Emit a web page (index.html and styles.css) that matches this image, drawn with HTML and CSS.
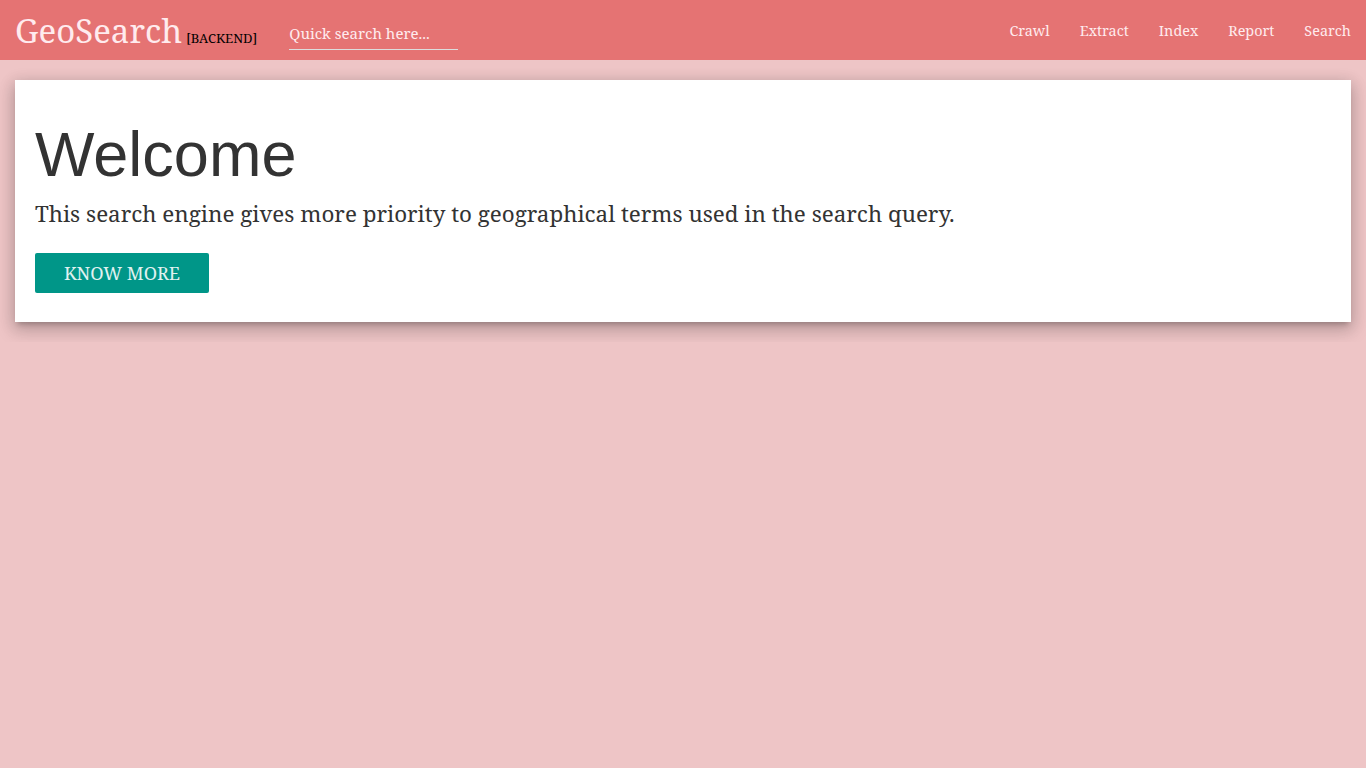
FILE: index.html
```html
<!DOCTYPE html>
<html>
<head>
<meta charset="utf-8">
<link rel="stylesheet" href="styles.css">
</head>
<body>
<nav class="navbar">
  <div class="brand">
    <span class="logo">GeoSearch</span>
    <span class="tag">[BACKEND]</span>
  </div>
  <div class="search"><input type="text" placeholder="Quick search here..."></div>
  <ul class="links">
    <li>Crawl</li><li>Extract</li><li>Index</li><li>Report</li><li>Search</li>
  </ul>
</nav>
<main class="main">
  <section class="card">
    <h1>Welcome</h1>
    <p>This search engine gives more priority to geographical terms used in the search query.</p>
    <button class="btn">KNOW MORE</button>
  </section>
</main>
</body>
</html>
```
FILE: styles.css
```css
* { box-sizing: border-box; }
body { margin: 0; background: #eec5c6; font-family: "Noto Serif", "DejaVu Serif", serif; color: #333; }
.navbar { height: 60px; background: #e57373; display: flex; align-items: center; padding: 0 15px; }
.brand { display: flex; align-items: baseline; }
.logo { font-size: 33px; color: #ffebee; }
.tag { font-size: 13px; color: #000; margin-left: 4px; }
.search { margin-left: 32px; margin-top: 8px; }
.search input { width: 169px; border: none; border-bottom: 1px solid #ddd; background: transparent; font-family: inherit; font-size: 15px; color: #fff; padding: 4px 0 6px; outline: none; }
.search input::placeholder { color: #ffebee; }
.links { list-style: none; display: flex; margin: 0 0 0 auto; padding: 0; gap: 30px; }
.links li { color: #ffebee; font-size: 14.4px; }
.main { padding: 20px 15px; }
.card { background: #fff; padding: 20px 20px 29px; box-shadow: 0 8px 17px 2px rgba(0,0,0,.14), 0 3px 14px 2px rgba(0,0,0,.12), 0 5px 5px -3px rgba(0,0,0,.2); }
h1 { font-family: "Liberation Sans", Arial, sans-serif; font-weight: 400; font-size: 63px; margin: 20px 0 10px; line-height: 1.1; }
.card p { font-size: 22.4px; margin: 0 0 25px; line-height: 1.3; }
.btn { background: #009688; color: #e0f2f1; border: none; border-radius: 2px; height: 40px; width: 174px; font-family: inherit; font-size: 18px; }
```
